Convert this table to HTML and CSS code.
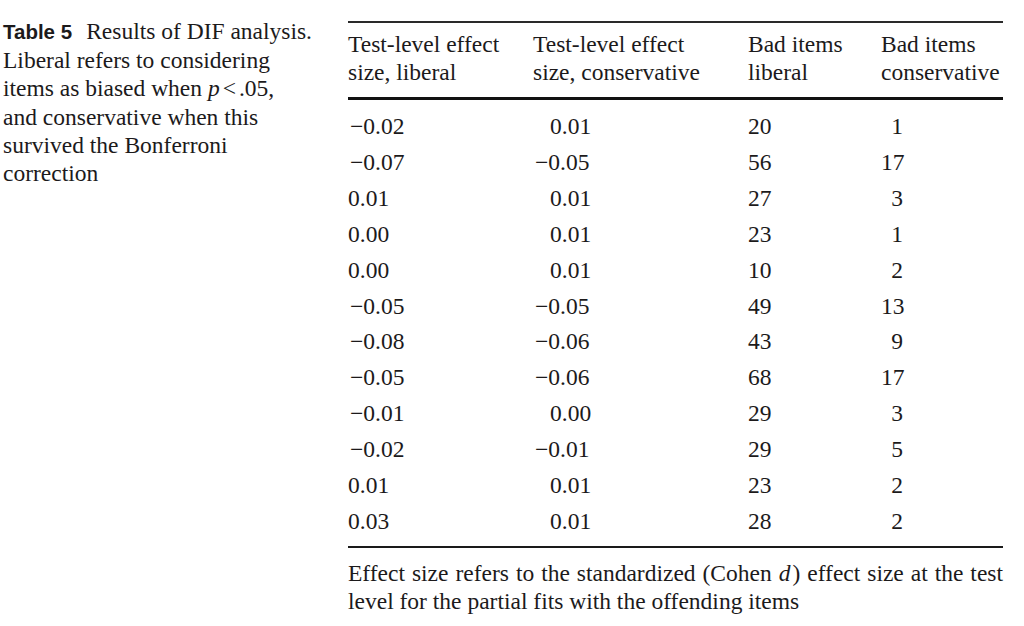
FILE: index.html
```html
<!DOCTYPE html>
<html>
<head>
<meta charset="utf-8">
<link rel="stylesheet" href="styles.css">
</head>
<body>
<div class="page">
  <div class="caption">
    <span class="label">Table 5</span>Results of DIF analysis.<br>
    Liberal refers to considering<br>
    items as biased when <i>p</i><span class="lt">&lt;</span>.05,<br>
    and conservative when this<br>
    survived the Bonferroni<br>
    correction
  </div>
  <div class="tablewrap">
    <table class="dif">
      <colgroup>
        <col class="c1"><col class="c2"><col class="c3"><col class="c4">
      </colgroup>
      <thead>
        <tr>
          <th>Test-level effect<br>size, liberal</th>
          <th>Test-level effect<br>size, conservative</th>
          <th>Bad items<br>liberal</th>
          <th>Bad items<br>conservative</th>
        </tr>
      </thead>
      <tbody>
        <tr><td class="neg">−0.02</td><td class="pos">0.01</td><td>20</td><td class="r">1</td></tr>
        <tr><td class="neg">−0.07</td><td class="neg">−0.05</td><td>56</td><td class="r">17</td></tr>
        <tr><td>0.01</td><td class="pos">0.01</td><td>27</td><td class="r">3</td></tr>
        <tr><td>0.00</td><td class="pos">0.01</td><td>23</td><td class="r">1</td></tr>
        <tr><td>0.00</td><td class="pos">0.01</td><td>10</td><td class="r">2</td></tr>
        <tr><td class="neg">−0.05</td><td class="neg">−0.05</td><td>49</td><td class="r">13</td></tr>
        <tr><td class="neg">−0.08</td><td class="neg">−0.06</td><td>43</td><td class="r">9</td></tr>
        <tr><td class="neg">−0.05</td><td class="neg">−0.06</td><td>68</td><td class="r">17</td></tr>
        <tr><td class="neg">−0.01</td><td class="pos">0.00</td><td>29</td><td class="r">3</td></tr>
        <tr><td class="neg">−0.02</td><td class="neg">−0.01</td><td>29</td><td class="r">5</td></tr>
        <tr><td>0.01</td><td class="pos">0.01</td><td>23</td><td class="r">2</td></tr>
        <tr><td>0.03</td><td class="pos">0.01</td><td>28</td><td class="r">2</td></tr>
      </tbody>
    </table>
    <div class="note">
      <span class="line1">Effect size refers to the standardized (Cohen <i>d</i>) effect size at the test</span>
      <span class="line2">level for the partial fits with the offending items</span>
    </div>
  </div>
</div>
</body>
</html>
```

FILE: styles.css
```css
html, body {
  margin: 0;
  padding: 0;
  background: #ffffff;
}

body {
  font-family: "Liberation Serif", "Times New Roman", serif;
  font-size: 23.5px;
  color: #1c1a1b;
}

.page {
  display: flex;
  align-items: flex-start;
  padding-left: 3px;
}

.caption {
  width: 345px;
  flex: none;
  line-height: 28.2px;
  padding-top: 17px;
}

.caption .label {
  font-family: "Liberation Sans", Arial, sans-serif;
  font-weight: bold;
  font-size: 20.5px;
  margin-right: 14px;
}

.caption .lt {
  margin: 0 3px;
}

.tablewrap {
  width: 655px;
  flex: none;
  padding-top: 21px;
}

.dif {
  width: 655px;
  border-collapse: collapse;
  table-layout: fixed;
  border-top: 2px solid #2a2a2a;
  border-bottom: 2px solid #1a1a1a;
}

.dif col.c1 { width: 185px; }
.dif col.c2 { width: 215px; }
.dif col.c3 { width: 133px; }
.dif col.c4 { width: 122px; }

.dif th {
  font-weight: normal;
  text-align: left;
  vertical-align: top;
  line-height: 28px;
  padding: 7px 0 11px 0;
  border-bottom: 3px solid #111;
  white-space: nowrap;
}

.dif tbody tr:first-child td {
  padding-top: 9px;
}

.dif tbody tr:last-child td {
  padding-bottom: 6px;
}

.dif td {
  padding: 0;
  line-height: 35.9px;
  text-align: left;
  white-space: nowrap;
}

.dif td.neg {
  padding-left: 2px;
}

.dif td.pos {
  padding-left: 17px;
}

.dif td.r {
  text-align: right;
  padding-right: 100px;
}

.note {
  display: flex;
  flex-direction: column;
  padding-top: 11px;
  line-height: 28px;
}

.note .line1 {
  text-align: justify;
  text-align-last: justify;
}

.note i {
  padding-right: 2px;
}
```
